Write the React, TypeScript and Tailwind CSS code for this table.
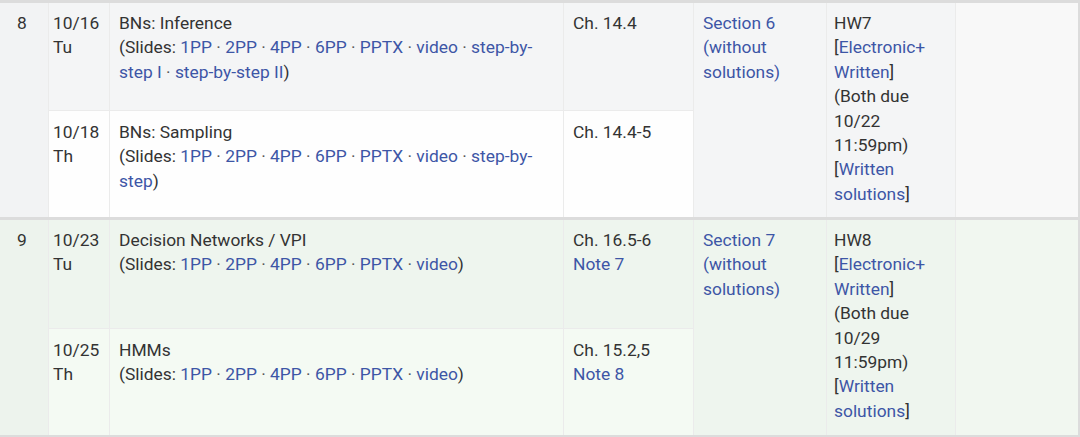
const link = "text-[#3d56a6]";

function Dot() {
  return <span className="text-[#555]"> · </span>;
}

function Slides({ extra }: { extra?: string[] }) {
  const items = ["1PP", "2PP", "4PP", "6PP", "PPTX", "video", ...(extra ?? [])];
  return (
    <>
      (Slides:{" "}
      {items.map((it, i) => (
        <span key={it}>
          <span className={link}>{it}</span>
          {i < items.length - 1 && <Dot />}
        </span>
      ))}
      )
    </>
  );
}

type Lecture = {
  date: string;
  day: string;
  title: string;
  extra?: string[];
  ch: string;
  note?: string;
};

type Week = {
  n: number;
  section: string;
  hw: string;
  due: string;
  lectures: Lecture[];
  rows: string;
  bgA: string;
  bgB: string;
  bgWeek: string;
  bgLast: string;
};

const weeks: Week[] = [
  {
    n: 8,
    section: "Section 6",
    hw: "HW7",
    due: "10/22",
    rows: "grid-rows-[107px_106px]",
    bgA: "bg-[#f4f5f6]",
    bgB: "bg-[#fefefe]",
    bgWeek: "bg-[#f2f3f4]",
    bgLast: "bg-[#f8f8f8]",
    lectures: [
      { date: "10/16", day: "Tu", title: "BNs: Inference", extra: ["step-by-step I", "step-by-step II"], ch: "Ch. 14.4" },
      { date: "10/18", day: "Th", title: "BNs: Sampling", extra: ["step-by-step"], ch: "Ch. 14.4-5" },
    ],
  },
  {
    n: 9,
    section: "Section 7",
    hw: "HW8",
    due: "10/29",
    rows: "grid-rows-[108px_106px]",
    bgA: "bg-[#eef5ee]",
    bgB: "bg-[#f4faf3]",
    bgWeek: "bg-[#edf3ed]",
    bgLast: "bg-[#f1f7f0]",
    lectures: [
      { date: "10/23", day: "Tu", title: "Decision Networks / VPI", ch: "Ch. 16.5-6", note: "Note 7" },
      { date: "10/25", day: "Th", title: "HMMs", ch: "Ch. 15.2,5", note: "Note 8" },
    ],
  },
];

function WeekBlock({ w }: { w: Week }) {
  const [a, b] = w.lectures;
  return (
    <div
      className={`grid grid-cols-[48px_60px_453px_129px_132px_128px_1fr] ${w.rows} gap-px bg-[#ebebeb]`}
    >
      <div className={`row-span-2 ${w.bgWeek} pt-2 pl-[17px]`}>{w.n}</div>
      {[a, b].map((l, i) => {
        const bg = i === 0 ? w.bgA : w.bgB;
        return [
          <div key={`d${i}`} className={`${bg} p-2 pl-[4px] ${i === 1 ? "col-start-2 pt-[9px]" : ""}`}>
            {l.date}
            <br />
            {l.day}
          </div>,
          <div key={`t${i}`} className={`${bg} p-2 pl-[9px] pr-[4px] ${i === 1 ? "pt-[9px]" : ""}`}>
            {l.title}
            <br />
            <Slides extra={l.extra} />
          </div>,
          <div key={`r${i}`} className={`${bg} p-2 pl-[9px] ${i === 1 ? "pt-[9px]" : ""}`}>
            {l.ch}
            {l.note && <div className={link}>{l.note}</div>}
          </div>,
          ...(i === 0
            ? [
                <div key="s" className={`row-span-2 ${w.bgA} p-2 pl-[9px] ${link}`}>
                  {w.section} (without solutions)
                </div>,
                <div key="h" className={`row-span-2 ${w.bgA} p-2 pl-[7px] pr-[6px]`}>
                  {w.hw}
                  <br />[<span className={link}>Electronic+</span>
                  <wbr />
                  <span className={link}>Written</span>]
                  <br />
                  (Both due
                  <br />
                  {w.due}
                  <br />
                  11:59pm)
                  <br />[<span className={link}>Written solutions</span>]
                </div>,
                <div key="x" className={`row-span-2 ${w.bgLast}`} />,
              ]
            : []),
        ];
      })}
    </div>
  );
}

export default function App() {
  return (
    <div className="w-[1080px] h-[437px] overflow-hidden bg-[#dcdcdc] pt-[3px] pb-[2px] pr-[2px] flex flex-col gap-[3px] font-['Roboto',sans-serif] text-[17.4px] leading-[24.4px] text-[#333]">
      {weeks.map((w) => (
        <WeekBlock key={w.n} w={w} />
      ))}
    </div>
  );
}
